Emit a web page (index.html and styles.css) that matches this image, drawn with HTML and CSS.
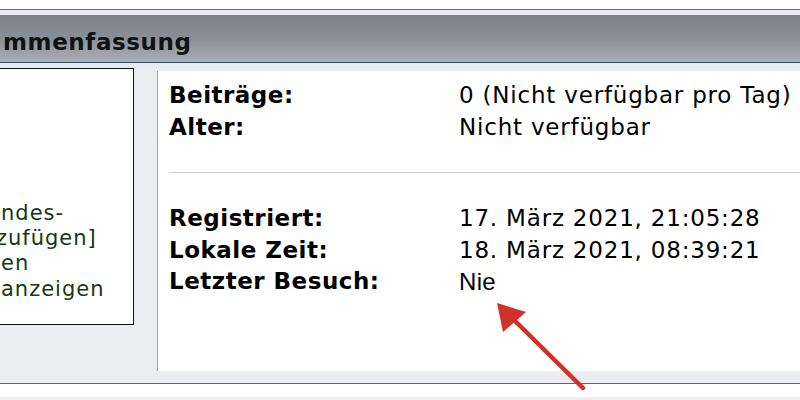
FILE: index.html
```html
<!DOCTYPE html>
<html lang="de">
<head>
<meta charset="utf-8">
<title>Zusammenfassung</title>
<link rel="stylesheet" href="styles.css">
</head>
<body>
<div class="page">
  <div class="frame">
    <div class="header"><span class="title">mmenfassung</span></div>
    <div class="content">
      <div class="sidebox">
        <div class="links">
          <div class="link">ndes-</div>
          <div class="link shift">zufügen]</div>
          <div class="link">en</div>
          <div class="link">anzeigen</div>
        </div>
      </div>
      <div class="panel">
        <div class="rows">
          <div class="label">Beiträge:</div><div class="value">0 (Nicht verfügbar pro Tag)</div>
          <div class="label">Alter:</div><div class="value">Nicht verfügbar</div>
        </div>
        <div class="sep"></div>
        <div class="rows">
          <div class="label">Registriert:</div><div class="value">17. März 2021, 21:05:28</div>
          <div class="label">Lokale Zeit:</div><div class="value">18. März 2021, 08:39:21</div>
          <div class="label">Letzter Besuch:</div><div class="value nie">Nie</div>
        </div>
      </div>
    </div>
  </div>
  <div class="below"></div>
  <svg class="arrow" width="800" height="400" viewBox="0 0 800 400" aria-hidden="true">
    <line x1="583" y1="388" x2="512" y2="318" stroke="#d2302a" stroke-width="4.5" stroke-linecap="round"/>
    <polygon points="497,303 503,332 526,312" fill="#d2302a"/>
  </svg>
</div>
</body>
</html>
```
FILE: styles.css
```css
html, body {
  margin: 0;
  padding: 0;
  background: #ffffff;
}
.page {
  position: relative;
  width: 800px;
  height: 400px;
  overflow: hidden;
  padding-top: 9px;
  box-sizing: border-box;
  font-family: "DejaVu Sans", Verdana, sans-serif;
}
.frame {
  border-top: 1px solid #6e6e6e;
  border-bottom: 1px solid #666666;
  background: #eaebef;
  padding-top: 5px;
}
.header {
  height: 48px;
  border-bottom: 1px solid #3d4f66;
  background: linear-gradient(#7b7f89, #8a9098 50%, #a9aeb8);
  display: flex;
  align-items: center;
  box-sizing: border-box;
}
.title {
  font-weight: bold;
  font-size: 23px;
  color: #111111;
  padding-left: 3px;
  letter-spacing: 0.6px;
  margin-top: 7px;
}
.content {
  display: flex;
  align-items: flex-start;
  height: 320px;
  background: #ebedf1;
  border-top: 5px solid #e8ecf2;
  box-sizing: border-box;
}
.sidebox {
  width: 144px;
  height: 257px;
  margin-left: -10px;
  background: #ffffff;
  border: 1px solid #111111;
  box-sizing: border-box;
  display: flex;
  flex-direction: column;
  justify-content: flex-end;
  padding-bottom: 22px;
  padding-left: 10px;
  flex: none;
  overflow: hidden;
}
.links {
  font-size: 21px;
  line-height: 25.3px;
  letter-spacing: 1px;
  color: #173717;
  white-space: nowrap;
}
.shift {
  margin-left: -5px;
}
.panel {
  margin-left: 23px;
  margin-top: 3px;
  height: 300px;
  flex: 1;
  background: #ffffff;
  border-left: 1px solid #a3a3a3;
  padding-top: 9px;
  padding-left: 11px;
  box-sizing: border-box;
}
.rows {
  display: grid;
  grid-template-columns: 290px auto;
  font-size: 23px;
  line-height: 31.5px;
  letter-spacing: 0.8px;
  color: #000000;
  white-space: nowrap;
}
.label {
  font-weight: bold;
  letter-spacing: 0.5px;
}
.nie {
  font-family: "Liberation Sans", Arial, sans-serif;
  font-size: 24px;
  letter-spacing: 0.3px;
}
.sep {
  height: 1px;
  background: #cccccc;
  margin-top: 29px;
  margin-bottom: 30px;
}
.below {
  height: 13px;
  background: #ffffff;
  border-bottom: 3px solid #eeeeee;
}
.arrow {
  position: absolute;
  left: 0;
  top: 0;
  pointer-events: none;
}
```
